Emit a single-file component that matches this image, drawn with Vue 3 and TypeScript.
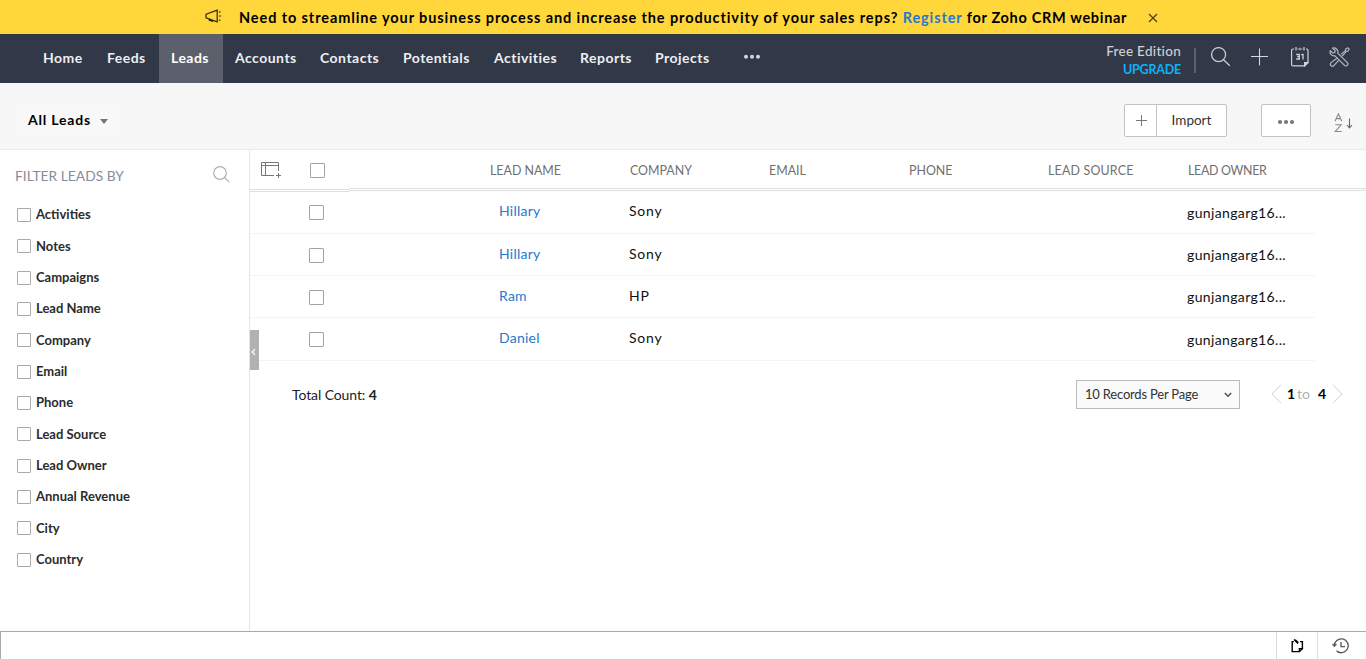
<script setup lang="ts">
import { ref } from 'vue'

interface Lead {
  name: string
  company: string
  owner: string
}

const tabs: string[] = ['Home', 'Feeds', 'Leads', 'Accounts', 'Contacts', 'Potentials', 'Activities', 'Reports', 'Projects']
const activeTab = ref('Leads')

const filters: string[] = [
  'Activities', 'Notes', 'Campaigns', 'Lead Name', 'Company', 'Email',
  'Phone', 'Lead Source', 'Lead Owner', 'Annual Revenue', 'City', 'Country',
]

const columns: string[] = ['LEAD NAME', 'COMPANY', 'EMAIL', 'PHONE', 'LEAD SOURCE', 'LEAD OWNER']

const leads: Lead[] = [
  { name: 'Hillary', company: 'Sony', owner: 'gunjangarg16...' },
  { name: 'Hillary', company: 'Sony', owner: 'gunjangarg16...' },
  { name: 'Ram', company: 'HP', owner: 'gunjangarg16...' },
  { name: 'Daniel', company: 'Sony', owner: 'gunjangarg16...' },
]
</script>

<template>
  <div class="app">
    <div class="banner">
      <svg class="horn" width="17" height="14" viewBox="0 0 17 14" fill="none" stroke="#2b2612" stroke-width="1.2">
        <path d="M1 5.2 L12.2 1.2 V12.8 L1 8.8 Z M4.3 10 V11.2 L8 12.3" />
        <path d="M14 3.2 L15.4 2.6 M14 7 H16 M14 10.8 L15.4 11.6" />
      </svg>
      <p class="banner-text">Need to streamline your business process and increase the productivity of your sales reps? <a>Register</a> <span>for Zoho CRM webinar</span></p>
      <svg class="close" width="10" height="10" viewBox="0 0 10 10" stroke="#4a4119" stroke-width="1.2">
        <path d="M1 1 L9 9 M9 1 L1 9" />
      </svg>
    </div>

    <header class="nav">
      <nav class="tabs">
        <a v-for="tab in tabs" :key="tab" class="tab" :class="{ active: tab === activeTab }" @click="activeTab = tab">{{ tab }}</a>
      </nav>
      <svg class="nav-dots" width="18" height="6" viewBox="0 0 18 6" fill="#d4d6da">
        <circle cx="3" cy="2.7" r="2" /><circle cx="9" cy="2.7" r="2" /><circle cx="15" cy="2.7" r="2" />
      </svg>
      <div class="edition">
        <span class="plan">Free Edition</span>
        <span class="upgrade">UPGRADE</span>
      </div>
      <div class="tools">
        <svg width="20" height="20" viewBox="0 0 20 20" fill="none" stroke="#c9ccd1" stroke-width="1.3">
          <circle cx="7.6" cy="7.6" r="7" /><path d="M12.6 12.8 L18.8 18.8" />
        </svg>
        <svg width="18" height="20" viewBox="0 0 18 20" fill="none" stroke="#d5d7db" stroke-width="1.1">
          <path d="M8.5 1.5 V18.5 M0 9.5 H17" />
        </svg>
        <svg width="18" height="20" viewBox="0 0 18 20" fill="none" stroke="#d0d2d6" stroke-width="1.2">
          <path d="M3 2 H2 Q.6 2 .6 3.4 V17.4 Q.6 18.9 2 18.9 H13.6 L17 15.4 V3.4 Q17 2 15.6 2 H15 M6.6 2 H7.8 M10.4 2 H11.5 M5 0 V3.6 M9 .8 V3.2 M13 0 V3.6" />
          <path d="M13.6 18.8 V15.5 H17 Z" fill="#d0d2d6" />
          <path d="M5.2 7.5 H8.3 V12 H5.2 M6.2 9.7 H8.3 M10.2 7.7 L12 7.5 V12.6" stroke-width="1.3" />
        </svg>
        <svg width="21" height="20" viewBox="0 0 21 20" fill="none" stroke="#b4b8c0" stroke-width="1.2" stroke-linejoin="round">
          <path d="M3.4 1.1 L6.1 3.5 L5.8 5.6 L3.8 6 L1.2 3.6 C.4 6.8 2.8 9.5 6 8.8 L15.3 18.2 C16.4 19.3 18 19 18.6 18 C19.2 17 18.9 16 18.2 15.3 L8.9 6.4 C9.7 3.2 6.8 .2 3.4 1.1 Z" />
          <path d="M11.8 7.4 L16.4 3.6 L16.8 1.8 L19 .8 L20.1 1.9 L19.2 4 L17.3 4.4 L13.2 9 M7.8 11.2 L2.1 15.6 C.8 16.8 1.3 18 2.1 18.7 C3 19.4 4.4 19.3 5.3 18.2 L9.8 13.2" />
        </svg>
      </div>
    </header>

    <section class="toolbar">
      <div class="view">
        <span>All Leads</span>
        <i class="caret"></i>
      </div>
      <div class="import">
        <button class="plus">
          <svg width="11" height="11" viewBox="0 0 11 11" stroke="#777" stroke-width="1"><path d="M5.5 0 V11 M0 5.5 H11" /></svg>
        </button>
        <button class="import-label">Import</button>
      </div>
      <button class="more">
        <svg width="18" height="6" viewBox="0 0 18 6" fill="#777"><circle cx="3" cy="3" r="2.1" /><circle cx="9" cy="3" r="2.1" /><circle cx="15" cy="3" r="2.1" /></svg>
      </button>
      <svg class="sort" width="20" height="20" viewBox="0 0 20 20" fill="none" stroke="#888" stroke-width="1.1">
        <path d="M1 8.2 L4.4 .8 L7.8 8.2 M2.2 5.6 H6.6" />
        <path d="M1.3 11.8 H7.2 L1.2 18.5 H7.7" />
        <path d="M15.5 5.5 V14.8 M13 12 L15.5 14.8 L18 12" stroke="#666" />
      </svg>
    </section>

    <main class="body">
      <aside class="sidebar">
        <div class="side-head">
          <span>FILTER LEADS BY</span>
          <svg width="17" height="17" viewBox="0 0 17 17" fill="none" stroke="#b0b0b0" stroke-width="1.2"><circle cx="7" cy="7" r="6.3" /><path d="M11.6 11.6 L16.2 16.2" /></svg>
        </div>
        <label v-for="f in filters" :key="f" class="filter"><i class="box small"></i><span>{{ f }}</span></label>
      </aside>

      <section class="content">
        <div class="handle">
          <svg width="5" height="8" viewBox="0 0 5 8" fill="none" stroke="#fff" stroke-width="1.2"><path d="M4 1.2 L1.2 4 L4 6.8" /></svg>
        </div>
        <div class="thead">
          <div class="corner">
            <svg width="21" height="18" viewBox="0 0 21 18" fill="none" stroke="#777" stroke-width="1">
              <path d="M13 14.5 H.5 V1.5 H17.5 V10 M.5 4.5 H17.5 M4.5 1.5 V14.5" /><path d="M17.5 12 V17 M15 14.5 H20" />
            </svg>
            <i class="box"></i>
          </div>
          <div class="heads"><span v-for="c in columns" :key="c">{{ c }}</span></div>
        </div>
        <div v-for="(lead, i) in leads" :key="i" class="row">
          <i class="box"></i>
          <a class="name">{{ lead.name }}</a>
          <span class="company">{{ lead.company }}</span>
          <span class="owner">{{ lead.owner }}</span>
        </div>
        <div class="foot">
          <span class="total">Total Count: <b>4</b></span>
          <div class="select">
            <span>10 Records Per Page</span>
            <svg width="8" height="6" viewBox="0 0 8 6" fill="none" stroke="#555" stroke-width="1.6"><path d="M.8 1 L4 4.2 L7.2 1" /></svg>
          </div>
          <div class="pager">
            <svg width="11" height="20" viewBox="0 0 11 20" fill="none" stroke="#d2d2d2"><path d="M10 .8 L1 10 L10 19.2" /></svg>
            <b class="from">1</b><span>to</span><b class="until">4</b>
            <svg width="11" height="20" viewBox="0 0 11 20" fill="none" stroke="#d2d2d2"><path d="M1 .8 L10 10 L1 19.2" /></svg>
          </div>
        </div>
      </section>
    </main>

    <footer class="dock">
      <div class="dock-item">
        <svg width="13" height="14" viewBox="0 0 13 14" fill="none" stroke="#000" stroke-width="1.4">
          <path d="M2.8 2.6 H1.2 V12.6 H8.4 L11.4 9.8 V2.6 H9" /><path d="M3 .6 L7 4.6 M4.2 .8 L7.4 3.8 M8.4 12.4 V9.6 H11.4" />
        </svg>
      </div>
      <div class="dock-item last">
        <svg width="17" height="16" viewBox="0 0 17 16" fill="none" stroke="#555" stroke-width="1.3">
          <path d="M2.4 8.2 A6.9 6.9 0 1 1 4.4 12.6" /><path d="M5.4 13.5 A6.9 6.9 0 0 0 9 14.8" /><path d="M.4 6.2 L2.3 8.8 L4.6 6.6 Z" fill="#555" stroke-width=".6" /><path d="M9 4 V8.6 H13" />
        </svg>
      </div>
    </footer>
  </div>
</template>

<style>
body {
  margin: 0;
  background: #fff;
}
</style>

<style scoped>
.app {
  width: 1366px;
  height: 659px;
  display: flex;
  flex-direction: column;
  overflow: hidden;
  box-sizing: border-box;
  font-family: Lato, "Liberation Sans", sans-serif;
  color: #111;
  white-space: nowrap;
}
.app * { box-sizing: border-box; }
svg { display: block; flex: none; }

.banner {
  height: 34px;
  flex: none;
  background: #ffd73b;
  display: flex;
  align-items: flex-start;
  padding-left: 205px;
}
.horn { margin-top: 9px; }
.banner-text {
  margin: 0 0 0 17px;
  width: 921px;
  font-size: 14.5px;
  font-weight: 700;
  line-height: 35px;
  letter-spacing: 0.9px;
  color: #000;
}
.banner-text a { color: #2878cc; }
.banner-text span { letter-spacing: 0.68px; }
.close { margin: 13px 0 0 -12px; }

.nav {
  height: 49px;
  flex: none;
  background: #313848;
  display: flex;
  align-items: flex-start;
  padding-left: 31px;
}
.tabs {
  display: grid;
  grid-template-columns: 64px 64px 64px 85px 83px 91px 86px 75px 79px;
}
.tab {
  height: 49px;
  line-height: 48px;
  padding-left: 12px;
  font-size: 14px;
  font-weight: 700;
  letter-spacing: 0.48px;
  color: #eeeff1;
}
.tab.active { background: #5b606c; color: #fff; }
.nav-dots { margin: 20px 0 0 21px; }
.edition {
  margin-left: auto;
  height: 25px;
  margin-top: 14px;
  width: 100px;
  padding-right: 13px;
  border-right: 2px solid #5c616d;
  display: flex;
  flex-direction: column;
  align-items: flex-end;
}
.plan { font-size: 13.5px; font-weight: 500; line-height: 18px; margin-top: -6px; letter-spacing: 0.3px; color: #cfd1d5; }
.upgrade { font-size: 12.5px; font-weight: 700; line-height: 20px; letter-spacing: -0.2px; color: #0fb1f7; }
.tools {
  display: grid;
  grid-template-columns: 40px 40px 38px 21px;
  margin: 13px 16px 0 15px;
}

.toolbar {
  height: 67px;
  flex: none;
  background: #f7f7f7;
  border-bottom: 1px solid #ebebeb;
  display: flex;
  align-items: flex-start;
  padding: 21px 13px 0 17px;
}
.view {
  width: 103px;
  height: 32px;
  padding-left: 11px;
  display: flex;
  align-items: center;
  background: #f8f8f8;
  font-size: 14px;
  font-weight: 700;
  letter-spacing: 0.8px;
  color: #000;
}
.view span { width: 72px; margin-top: -2px; }
.caret {
  margin-top: 3px;
  border: 4.5px solid transparent;
  border-top: 5px solid #777;
  border-bottom: 0;
}
button {
  font-family: inherit;
  background: #fff;
  border: 1px solid #c2c2c2;
  padding: 0;
  height: 33px;
  display: flex;
  align-items: center;
  justify-content: center;
  color: #333;
}
.import { margin-left: auto; display: flex; }
.plus { width: 33px; border-radius: 2px 0 0 2px; }
.plus svg { margin-left: 1px; }
.import-label { width: 71px; margin-left: -1px; border-radius: 0 2px 2px 0; font-size: 13.5px; padding-bottom: 2px; }
.more { width: 50px; margin: 0 23px 0 34px; border-radius: 2px; }
.more svg { margin-top: 3px; }
.sort { margin-top: 9px; margin-right: -1px; }

.body { height: 481px; flex: none; display: flex; }
.sidebar {
  width: 250px;
  border-right: 1px solid #e6e6e6;
  padding: 16px 0 0 15px;
}
.side-head {
  display: flex;
  justify-content: space-between;
  padding-right: 19px;
  height: 33.2px;
  font-size: 13.8px;
  line-height: 20px;
  color: #868c9b;
}
.filter {
  height: 31.36px;
  display: flex;
  align-items: center;
  padding-left: 2px;
  gap: 5px;
  font-size: 13px;
  font-weight: 700;
  color: #2c2c2c;
}
.filter span { margin-top: -1.4px; }
.box {
  display: block;
  flex: none;
  width: 15px;
  height: 15px;
  border: 1px solid #a3a3a3;
  border-radius: 1px;
  background: #fff;
}
.box.small { width: 14px; height: 14px; border-color: #aaa; }

.content { flex: 1; position: relative; }
.handle {
  position: absolute;
  left: 0;
  top: 180px;
  width: 9px;
  height: 40px;
  background: #b1b1b1;
  display: flex;
  align-items: center;
  padding-left: 1px;
}
.handle svg { margin-top: 3px; }
.thead { height: 41px; display: flex; align-items: flex-start; }
.corner {
  width: 100px;
  height: 42px;
  border-bottom: 3px double #dfdfdf;
  display: flex;
  padding: 11px 0 0 11px;
}
.corner .box { margin: 2px 0 0 28px; }
.heads {
  flex: 1;
  height: 41px;
  border-bottom: 3px double #dfdfdf;
  padding-left: 140px;
  display: grid;
  grid-template-columns: 140px 139px 140px 139px 140px 1fr;
  font-size: 12.4px;
  line-height: 42px;
  color: #707070;
}
.heads span:nth-child(5) { letter-spacing: 0.2px; }
.heads span:last-child { letter-spacing: -0.3px; }
.row {
  width: 1065px;
  height: 42px;
  border-bottom: 1px solid #f4f4f4;
  display: grid;
  grid-template-columns: 190px 130px 558px 1fr;
  padding-left: 59px;
  font-size: 14px;
  line-height: 20px;
}
.row:nth-child(3), .row:nth-child(6) { height: 43px; }
.row .box { margin-top: 14px; }
.name { margin-top: 10px; letter-spacing: 0.25px; color: #2878cc; }
.company { margin-top: 10px; letter-spacing: 0.75px; color: #111; }
.owner { align-self: end; margin-bottom: 10px; letter-spacing: 0.36px; color: #111; }

.foot {
  display: flex;
  align-items: flex-start;
  padding: 19px 23px 0 42px;
  font-size: 14px;
}
.total { line-height: 29px; flex: 1; letter-spacing: -0.1px; color: #222; }
.select {
  width: 164px;
  height: 29px;
  border: 1px solid #bbb;
  background: #fafafa;
  display: flex;
  align-items: center;
  justify-content: space-between;
  padding: 0 7px 0 8px;
  font-size: 13px;
  letter-spacing: -0.2px;
  color: #333;
}
.select span { margin-top: -1px; }
.pager { margin: 5px 0 0 31px; display: flex; line-height: 18px; color: #b0b0b0; }
.pager svg { margin-top: -1px; }
.pager b { color: #000; }
.from { width: 10px; margin-left: 5px; }
.pager span { width: 21px; }
.until { width: 14px; }

.dock {
  height: 28px;
  flex: none;
  border-top: 1px solid #a9a9a9;
  border-left: 1px solid #a9a9a9;
  background: #fff;
  display: flex;
  justify-content: flex-end;
}
.dock-item {
  width: 41px;
  border-left: 1px solid #dcdcdc;
  padding: 7px 0 0 14px;
}
.dock-item.last { width: 49px; padding: 6px 0 0 14px; }
</style>
